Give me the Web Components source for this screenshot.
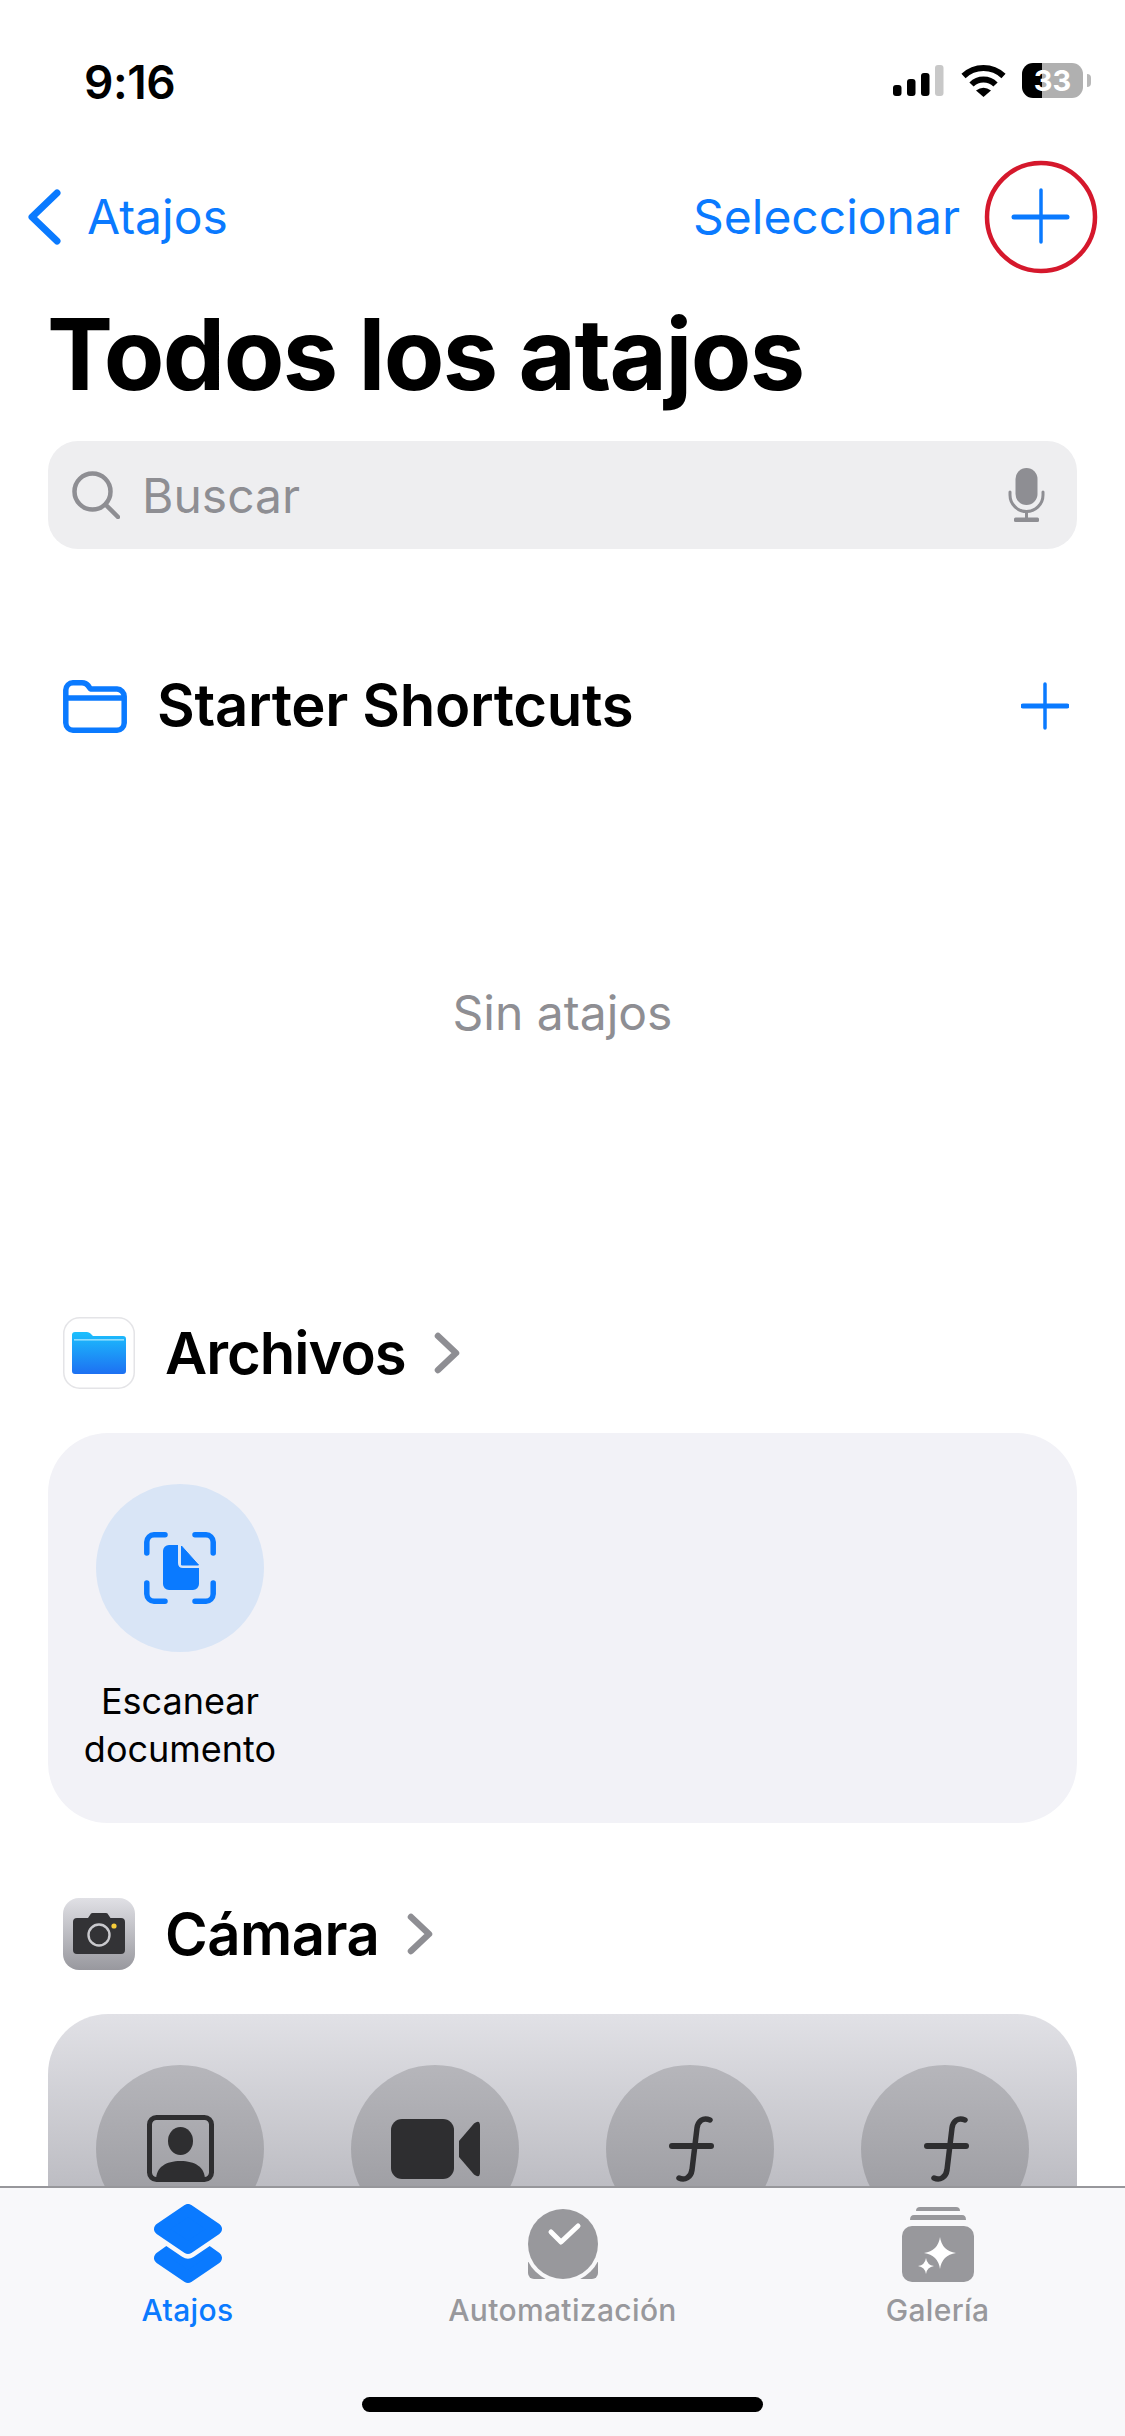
<!DOCTYPE html>
<html lang="es">
<head>
<meta charset="utf-8">
<title>Todos los atajos</title>
<style>
  html, body { margin: 0; padding: 0; background: #fff; }
  body { font-family: Inter, "Noto Sans", "Liberation Sans", sans-serif; }
</style>
</head>
<body>
<phone-screen>
  <status-bar slot="top" time="9:16" battery="33"></status-bar>
  <nav-bar slot="top" back="Atajos" action="Seleccionar"></nav-bar>
  <page-title slot="top">Todos los atajos</page-title>
  <search-field slot="top" placeholder="Buscar"></search-field>

  <section-header style="margin-top:117px;height:80px;letter-spacing:-0.3px;--title-pad:2px">
    <sf-icon slot="icon" name="folder"></sf-icon>
    Starter Shortcuts
    <sf-icon slot="end" name="plus"></sf-icon>
  </section-header>
  <empty-note>Sin atajos</empty-note>

  <section-header chevron style="letter-spacing:-1px">
    <sf-icon slot="icon" name="files"></sf-icon>
    Archivos
  </section-header>
  <shortcut-card>
    <shortcut-tile label="Escanear documento"><sf-icon name="scan"></sf-icon></shortcut-tile>
  </shortcut-card>

  <section-header chevron style="margin-top:75px">
    <sf-icon slot="icon" name="camera"></sf-icon>
    Cámara
  </section-header>
  <shortcut-card dimmed>
    <shortcut-tile dimmed><sf-icon name="contact"></sf-icon></shortcut-tile>
    <shortcut-tile dimmed><sf-icon name="video"></sf-icon></shortcut-tile>
    <shortcut-tile dimmed><sf-icon name="func"></sf-icon></shortcut-tile>
    <shortcut-tile dimmed><sf-icon name="func"></sf-icon></shortcut-tile>
  </shortcut-card>

  <tab-bar slot="overlay">
    <tab-item active label="Atajos"><sf-icon name="layers"></sf-icon></tab-item>
    <tab-item label="Automatización"><sf-icon name="automation"></sf-icon></tab-item>
    <tab-item label="Galería"><sf-icon name="gallery"></sf-icon></tab-item>
  </tab-bar>
</phone-screen>

<script>
const BLUE = "#0a7aff";
const DARK = "#2e2e30";
const GREY = "#98989c";
const TAB_BG = "#f8f8fa";

const ICONS = {
  back: `<svg width="34" height="56" viewBox="0 0 34 56" fill="none" stroke="${BLUE}" stroke-width="7" stroke-linecap="round" stroke-linejoin="round"><path d="M30 4 L5 28 L30 52"/></svg>`,
  plusCircled: `<svg width="114" height="114" viewBox="0 0 114 114" fill="none"><path d="M57 30 V82" stroke="${BLUE}" stroke-width="3.5" stroke-linecap="round"/><path d="M30 57 H83" stroke="${BLUE}" stroke-width="5" stroke-linecap="round"/><circle cx="57" cy="57" r="54" stroke="#d5182c" stroke-width="4.5"/></svg>`,
  plus: `<svg width="48" height="48" viewBox="0 0 48 48" fill="none" stroke="${BLUE}" stroke-linecap="round"><path d="M24 2 V46" stroke-width="3.5"/><path d="M2 24 H46" stroke-width="5"/></svg>`,
  search: `<svg width="48" height="48" viewBox="0 0 48 48" fill="none" stroke="#8e8e93" stroke-width="4.5" stroke-linecap="round"><circle cx="20.5" cy="20.5" r="18"/><path d="M33.5 33.5 L46 46"/></svg>`,
  mic: `<svg width="37" height="54" viewBox="0 0 37 54" fill="none"><rect x="7.5" y="0" width="22" height="37" rx="11" fill="#8e8e93"/><path d="M2 24 V27 A16.5 16.5 0 0 0 35 27 V24" stroke="#8e8e93" stroke-width="3" stroke-linecap="round"/><path d="M18.5 44 V50" stroke="#8e8e93" stroke-width="3"/><rect x="6" y="49.5" width="25" height="4.5" rx="1.5" fill="#8e8e93"/></svg>`,
  folder: `<svg width="64" height="53" viewBox="0 0 64 53" fill="none" stroke="${BLUE}" stroke-width="5.5" stroke-linejoin="round"><path d="M2.8 10 A7.5 7.5 0 0 1 10 2.8 H19 Q23 2.8 25 5.5 L27.5 9 H54 A7.5 7.5 0 0 1 61.2 16.5 V43 A7.5 7.5 0 0 1 54 50.2 H10 A7.5 7.5 0 0 1 2.8 43 Z"/><path d="M2.8 18 H61.2"/></svg>`,
  files: `<svg width="72" height="72" viewBox="0 0 72 72"><defs><linearGradient id="f" x1="0" y1="0" x2="0" y2="1"><stop offset="0" stop-color="#1cc0fd"/><stop offset="1" stop-color="#1d70f2"/></linearGradient></defs><rect x=".75" y=".75" width="70.5" height="70.5" rx="16" fill="#fff" stroke="#e4e4e7" stroke-width="1.5"/><path d="M12 15 H24 Q26 15 27.5 16.5 L30 19 H60 Q63 19 63 22 V54 Q63 57 60 57 H12 Q9 57 9 54 V18 Q9 15 12 15 Z" fill="url(#f)"/><rect x="11" y="22" width="50" height="1.6" fill="#8fdcfd"/></svg>`,
  camera: `<svg width="72" height="72" viewBox="0 0 72 72"><defs><linearGradient id="c" x1="0" y1="0" x2="0" y2="1"><stop offset="0" stop-color="#e0e0e5"/><stop offset="1" stop-color="#98989e"/></linearGradient></defs><rect width="72" height="72" rx="16" fill="url(#c)"/><path d="M14 20 H25 L28 15.5 Q28.5 15 29.5 15 H43 Q44 15 44.5 15.5 L47.5 20 H58 Q62 20 62 24 V52 Q62 56 58 56 H14 Q10 56 10 52 V24 Q10 20 14 20 Z" fill="#333336"/><circle cx="36" cy="37" r="10.5" fill="none" stroke="#c9c9cd" stroke-width="2.4"/><circle cx="51" cy="28" r="2.6" fill="#f7cc3a"/></svg>`,
  scan: `<svg width="72" height="72" viewBox="0 0 72 72" fill="none"><g stroke="${BLUE}" stroke-width="5.5" stroke-linecap="round"><path d="M2.8 21 V10 A7.5 7.5 0 0 1 10 2.8 H21"/><path d="M51 2.8 H62 A7.5 7.5 0 0 1 69.2 10 V21"/><path d="M69.2 51 V62 A7.5 7.5 0 0 1 62 69.2 H51"/><path d="M21 69.2 H10 A7.5 7.5 0 0 1 2.8 62 V51"/></g><path d="M25 13 H34 V31 Q34 36 39 36 H55 V52 A6 6 0 0 1 49 58 H25 A6 6 0 0 1 19 52 V19 A6 6 0 0 1 25 13 Z" fill="${BLUE}"/><path d="M37.5 14 L54.5 33 H37.5 Z" fill="${BLUE}" stroke="${BLUE}" stroke-width="1" stroke-linejoin="round"/></svg>`,
  contact: `<svg width="67" height="68" viewBox="0 0 67 68" fill="none"><rect x="2.5" y="2.5" width="62" height="62" rx="7" stroke="${DARK}" stroke-width="5"/><ellipse cx="33.5" cy="26" rx="12.5" ry="14" fill="${DARK}"/><path d="M9 65 C9 52 19 46 33.5 46 C48 46 58 52 58 65 Z" fill="${DARK}"/></svg>`,
  video: `<svg width="89" height="60" viewBox="0 0 89 60" fill="${DARK}"><rect width="63" height="60" rx="11"/><path d="M68 22 L83 4.5 Q89 0 89 7 V53 Q89 60 83 55.5 L68 38 Z"/></svg>`,
  func: `<svg width="50" height="68" viewBox="0 0 50 68" fill="none" stroke="${DARK}" stroke-linecap="round"><path d="M45 5 C38 2 33 6 32 13 L27 55 C26 62 20 66 14 63" stroke-width="5.5"/><path d="M7 31 H46" stroke-width="6"/></svg>`,
  layers: `<svg width="70" height="80" viewBox="0 0 70 80"><path d="M35 34 L63 54 L35 73 L7 54 Z" fill="${BLUE}" stroke="${BLUE}" stroke-width="12" stroke-linejoin="round"/><path d="M35 6 L63 25 L35 44 L7 25 Z" fill="${TAB_BG}" stroke="${TAB_BG}" stroke-width="21" stroke-linejoin="round"/><path d="M35 6 L63 25 L35 44 L7 25 Z" fill="${BLUE}" stroke="${BLUE}" stroke-width="12" stroke-linejoin="round"/></svg>`,
  automation: `<svg width="70" height="70" viewBox="0 0 70 70"><rect y="35" width="70" height="35" rx="6" fill="${GREY}"/><circle cx="35" cy="35" r="39" fill="${TAB_BG}"/><circle cx="35" cy="35" r="35" fill="${GREY}"/><path d="M23 23 L33 33 L50 17" fill="none" stroke="#fff" stroke-width="5" stroke-linecap="round" stroke-linejoin="round"/></svg>`,
  gallery: `<svg width="72" height="77" viewBox="0 0 72 77" fill="${GREY}"><path d="M18 1 H54 Q58 1 58 5 H14 Q14 1 18 1 Z"/><path d="M12 9 H60 Q64 9 64 14 H8 Q8 9 12 9 Z"/><rect y="20" width="72" height="56" rx="10"/><path d="M38 31 Q40 45 54 47 Q40 49 38 63 Q36 49 22 47 Q36 45 38 31 Z" fill="#fff"/><path d="M24 52 Q25 59 32 60 Q25 61 24 68 Q23 61 16 60 Q23 59 24 52 Z" fill="#fff"/></svg>`
};

class SfIcon extends HTMLElement {
  connectedCallback() {
    this.attachShadow({ mode: "open" });
    this.shadowRoot.innerHTML = `
      <style>
        :host { display: inline-flex; }
        svg { display: block; }
      </style>
      ${ICONS[this.getAttribute("name")]}`;
  }
}

class PhoneScreen extends HTMLElement {
  constructor() {
    super();
    this.attachShadow({ mode: "open" });
    this.shadowRoot.innerHTML = `
      <style>
        :host {
          display: block;
          position: relative;
          width: 1125px;
          height: 2436px;
          overflow: hidden;
          background: #fff;
          color: #000;
        }
      </style>
      <slot name="top"></slot>
      <slot></slot>
      <slot name="overlay"></slot>`;
  }
}

class StatusBar extends HTMLElement {
  connectedCallback() {
    this.attachShadow({ mode: "open" });
    this.shadowRoot.innerHTML = `
      <style>
        :host {
          display: flex;
          align-items: center;
          justify-content: space-between;
          height: 160px;
          padding: 0 42px 0 84px;
          box-sizing: border-box;
        }
        .time { padding-top: 3px; font-size: 46px; font-weight: 600; letter-spacing: -0.4px; }
        .icons { display: flex; align-items: center; }
        .signal { margin-right: 17px; }
        .wifi { margin-right: 16px; }
        .battery {
          position: relative;
          width: 61px;
          height: 35px;
          border-radius: 11px;
          background: linear-gradient(90deg, #000 0 20px, #b0b0b0 20px);
          color: #fff;
          font-size: 29px;
          font-weight: 700;
          line-height: 35px;
          text-align: center;
        }
        .battery::after {
          content: "";
          position: absolute;
          left: 65px;
          top: 11px;
          width: 4px;
          height: 13px;
          border-radius: 0 5px 5px 0;
          background: #b8b8b8;
        }
      </style>
      <span class="time">${this.getAttribute("time")}</span>
      <div class="icons">
        <svg class="signal" width="51" height="31" viewBox="0 0 51 31">
          <rect x="0" y="20" width="8.5" height="11" rx="3"/>
          <rect x="14" y="14" width="8.5" height="17" rx="3"/>
          <rect x="28" y="8" width="8.5" height="23" rx="3"/>
          <rect x="42" y="0" width="8.5" height="31" rx="3" fill="#c8c8c8"/>
        </svg>
        <svg class="wifi" width="45" height="33" viewBox="0 0 45 33" fill="none" stroke="#000" stroke-width="6">
          <path d="M2.5 12 A29 29 0 0 1 42.5 12"/>
          <path d="M10.5 20.5 A17 17 0 0 1 34.5 20.5"/>
          <path d="M15 26.5 Q22.5 21 30 26.5 L22.5 33 Z" fill="#000" stroke="none"/>
        </svg>
        <div class="battery">${this.getAttribute("battery")}</div>
      </div>`;
  }
}

class NavBar extends HTMLElement {
  connectedCallback() {
    this.attachShadow({ mode: "open" });
    this.shadowRoot.innerHTML = `
      <style>
        :host {
          display: flex;
          align-items: center;
          justify-content: space-between;
          height: 114px;
          padding: 0 27px 0 27px;
          color: ${BLUE};
          font-size: 48px;
        }
        .side { display: flex; align-items: center; }
        .side span { padding-bottom: 1px; }
        .back { gap: 26px; }
        .right { gap: 24px; }
      </style>
      <div class="side back"><sf-icon name="back"></sf-icon><span>${this.getAttribute("back")}</span></div>
      <div class="side right"><span>${this.getAttribute("action")}</span><sf-icon name="plusCircled"></sf-icon></div>`;
  }
}

class PageTitle extends HTMLElement {
  constructor() {
    super();
    this.attachShadow({ mode: "open" });
    this.shadowRoot.innerHTML = `
      <style>
        :host {
          display: block;
          padding: 30px 0 37px 47px;
          font-size: 99px;
          font-weight: 700;
          line-height: 100px;
          letter-spacing: -1.6px;
        }
      </style>
      <slot></slot>`;
  }
}

class SearchField extends HTMLElement {
  connectedCallback() {
    this.attachShadow({ mode: "open" });
    this.shadowRoot.innerHTML = `
      <style>
        :host {
          display: flex;
          align-items: center;
          height: 108px;
          margin: 0 48px;
          padding: 0 32px 0 24px;
          border-radius: 30px;
          background: #eeeef0;
          color: #8e8e93;
          font-size: 48px;
        }
        span { margin-left: 22px; flex: 1; }
      </style>
      <sf-icon name="search"></sf-icon>
      <span>${this.getAttribute("placeholder")}</span>
      <sf-icon name="mic"></sf-icon>`;
  }
}

class SectionHeader extends HTMLElement {
  connectedCallback() {
    this.attachShadow({ mode: "open" });
    const chevron = this.hasAttribute("chevron")
      ? `<svg class="chev" width="26" height="42" viewBox="0 0 26 42" fill="none" stroke="#8e8e93" stroke-width="6.5" stroke-linecap="round" stroke-linejoin="round"><path d="M4 4 L22 21 L4 38"/></svg>`
      : "";
    this.shadowRoot.innerHTML = `
      <style>
        :host {
          display: flex;
          align-items: center;
          height: 72px;
          padding: 0 56px 0 63px;
          font-size: 58px;
          font-weight: 600;
          letter-spacing: -0.5px;
        }
        .title { margin-left: 30px; padding-bottom: var(--title-pad, 0); }
        .chev { margin-left: 28px; }
        .end { margin-left: auto; display: flex; }
      </style>
      <slot name="icon"></slot>
      <span class="title"><slot></slot></span>
      ${chevron}
      <div class="end"><slot name="end"></slot></div>`;
  }
}

class EmptyNote extends HTMLElement {
  constructor() {
    super();
    this.attachShadow({ mode: "open" });
    this.shadowRoot.innerHTML = `
      <style>
        :host {
          display: flex;
          align-items: center;
          justify-content: center;
          height: 571px;
          padding-bottom: 38px;
          box-sizing: border-box;
          color: #8e8e93;
          font-size: 48px;
        }
      </style>
      <slot></slot>`;
  }
}

class ShortcutCard extends HTMLElement {
  constructor() {
    super();
    this.attachShadow({ mode: "open" });
    this.shadowRoot.innerHTML = `
      <style>
        :host {
          display: grid;
          grid-template-columns: repeat(4, 1fr);
          margin: 44px 48px 0;
          padding: 51px 4.5px 50px;
          border-radius: 60px;
          background: #f2f2f7;
        }
        :host([dimmed]) {
          height: 480px;
          box-sizing: border-box;
          background: linear-gradient(180deg, #e1e1e6 0, #bdbdc3 172px);
        }
      </style>
      <slot></slot>`;
  }
}

class ShortcutTile extends HTMLElement {
  connectedCallback() {
    this.attachShadow({ mode: "open" });
    const label = this.getAttribute("label");
    this.shadowRoot.innerHTML = `
      <style>
        :host {
          display: flex;
          flex-direction: column;
          align-items: center;
        }
        .circle {
          display: flex;
          align-items: center;
          justify-content: center;
          width: 168px;
          height: 168px;
          border-radius: 50%;
          background: #d9e5f6;
        }
        :host([dimmed]) .circle {
          background: linear-gradient(180deg, #b6b6bb 0, #a0a0a5 121px);
        }
        .label {
          width: 230px;
          margin-top: 25px;
          font-size: 36px;
          line-height: 48px;
          text-align: center;
          color: #000;
        }
      </style>
      <div class="circle"><slot></slot></div>
      ${label ? `<div class="label">${label}</div>` : ""}`;
  }
}

class TabBar extends HTMLElement {
  constructor() {
    super();
    this.attachShadow({ mode: "open" });
    this.shadowRoot.innerHTML = `
      <style>
        /* sits over the scrolled content, like the real bar */
        :host {
          position: absolute;
          left: 0;
          right: 0;
          bottom: 0;
          height: 250px;
          box-sizing: border-box;
          border-top: 2px solid #97979b;
          background: ${TAB_BG};
          display: flex;
          flex-direction: column;
          align-items: center;
        }
        .row {
          display: grid;
          grid-template-columns: repeat(3, 375px);
          padding-top: 12px;
        }
        .home {
          width: 401px;
          height: 15px;
          margin-top: 67px;
          border-radius: 8px;
          background: #000;
        }
      </style>
      <div class="row"><slot></slot></div>
      <div class="home"></div>`;
  }
}

class TabItem extends HTMLElement {
  connectedCallback() {
    this.attachShadow({ mode: "open" });
    this.shadowRoot.innerHTML = `
      <style>
        :host {
          display: flex;
          flex-direction: column;
          align-items: center;
          color: ${GREY};
          font-size: 30px;
          font-weight: 500;
          letter-spacing: 0.35px;
        }
        :host([active]) { color: ${BLUE}; }
        .icon { display: flex; align-items: center; height: 88px; }
        .label { margin-top: 2px; line-height: 40px; }
      </style>
      <div class="icon"><slot></slot></div>
      <div class="label">${this.getAttribute("label")}</div>`;
  }
}

customElements.define("sf-icon", SfIcon);
customElements.define("phone-screen", PhoneScreen);
customElements.define("status-bar", StatusBar);
customElements.define("nav-bar", NavBar);
customElements.define("page-title", PageTitle);
customElements.define("search-field", SearchField);
customElements.define("section-header", SectionHeader);
customElements.define("empty-note", EmptyNote);
customElements.define("shortcut-card", ShortcutCard);
customElements.define("shortcut-tile", ShortcutTile);
customElements.define("tab-bar", TabBar);
customElements.define("tab-item", TabItem);
</script>
</body>
</html>
